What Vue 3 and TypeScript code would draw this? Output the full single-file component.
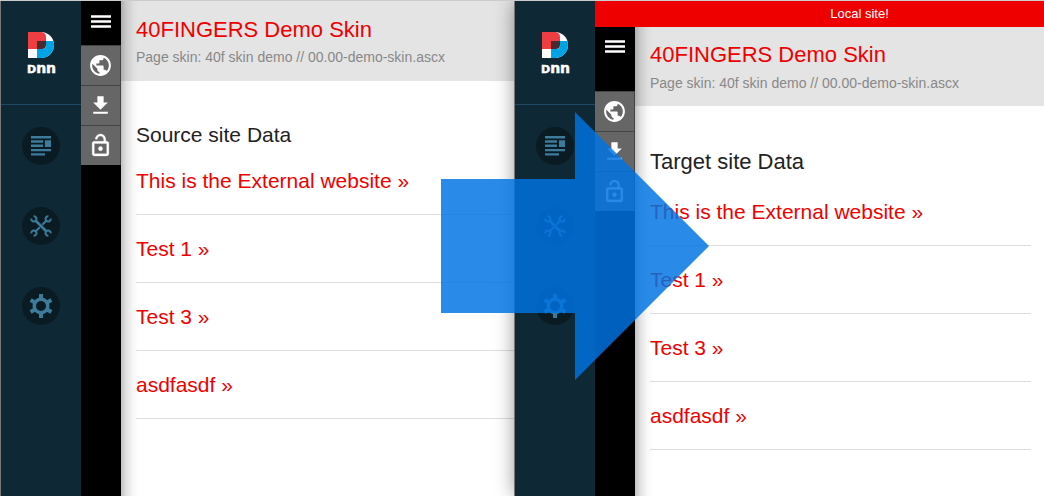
<script setup lang="ts">
interface Site {
  id: string
  notice: string
  heading: string
}

const sites: Site[] = [
  { id: 'source', notice: '', heading: 'Source site Data' },
  { id: 'target', notice: 'Local site!', heading: 'Target site Data' },
]

const links: string[] = ['This is the External website', 'Test 1', 'Test 3', 'asdfasdf']
</script>

<template>
  <main class="compare">
    <section v-for="site in sites" :key="site.id" class="site" :class="site.id">
      <nav class="persona" aria-label="Administration">
        <a class="logo" href="#" aria-label="Home">
          <svg width="30" height="42" viewBox="0 0 30 42">
            <path fill="#fff" d="M0 0h13a13 13 0 0 1 0 26H0z" />
            <path fill="#ef3e42" d="M0 0h14q4 1 4 5v4H9v8H0z" />
            <path fill="#4a2a2c" d="M9 9h9v4q0 4-4 4H9z" />
            <path fill="#00a4e4" d="M18 9h7.400q.6 2 .6 4a13 13 0 0 1-13 13H9v-9h5q4 0 4-4z" />
            <text x="-1" y="41" class="wordmark"><tspan class="cap">D</tspan><tspan>nn</tspan></text>
          </svg>
        </a>
        <button type="button" class="round" aria-label="Content">
          <svg width="20" height="20" viewBox="0 0 20 20" fill="#3d7b9b">
            <path d="M0 0h20v2.500H0zM0 4.300h12v2.500H0zM0 8.600h12v2.300H0zM14 4.300h6v6.600h-6zM0 13h20v2.300H0zM0 17.300h14v2.300H0z" />
          </svg>
        </button>
        <button type="button" class="round" aria-label="Manage">
          <svg width="22" height="22" viewBox="0 0 22 22" fill="none" stroke="#3d7b9b">
            <path stroke-width="2.600" d="M5.500 5.500l11 11" />
            <path stroke-width="2" d="M16.500 5.500l-4.300 4.300M9.800 12.200l-4.300 4.300" />
            <path stroke-width="2" d="M3.600 1.300A2.600 2.600 0 1 1 1.300 3.600M18.400 1.300A2.600 2.600 0 1 0 20.700 3.600M3.600 20.700A2.600 2.600 0 1 0 1.300 18.400M18.400 20.700A2.600 2.600 0 1 1 20.700 18.400" />
          </svg>
        </button>
        <button type="button" class="round" aria-label="Settings">
          <svg width="24" height="24" viewBox="0 0 24 24">
            <g fill="#3d7b9b">
              <circle cx="12" cy="12" r="8.500" />
              <rect x="10" y="0" width="4" height="24" />
              <rect x="10" y="0" width="4" height="24" transform="rotate(60 12 12)" />
              <rect x="10" y="0" width="4" height="24" transform="rotate(120 12 12)" />
            </g>
            <circle cx="12" cy="12" r="5" fill="#0a1b23" />
          </svg>
        </button>
      </nav>

      <div class="skin">
        <p v-if="site.notice" class="notice">{{ site.notice }}</p>
        <div class="page">
          <div class="tools">
            <button type="button" class="menu" aria-label="Menu">
              <svg width="20" height="13" viewBox="0 0 20 13" fill="#fff">
                <path d="M0 .2h20v2.600H0zM0 5.200h20v2.600H0zM0 10.200h20v2.600H0z" />
              </svg>
            </button>
            <button type="button" class="tool" aria-label="Website">
              <svg width="25" height="25" viewBox="0 0 24 24" fill="#fff">
                <path d="M12 2C6.480 2 2 6.480 2 12s4.480 10 10 10 10-4.480 10-10S17.520 2 12 2zm-1 17.930c-3.950-.49-7-3.850-7-7.930 0-.62.08-1.210.21-1.790L9 15v1c0 1.100.9 2 2 2v1.930zm6.900-2.540c-.26-.81-1-1.390-1.900-1.390h-1v-3c0-.55-.45-1-1-1H8v-2h2c.55 0 1-.45 1-1V7h2c1.100 0 2-.9 2-2v-.41c2.930 1.190 5 4.060 5 7.410 0 2.080-.8 3.970-2.100 5.390z" />
              </svg>
            </button>
            <button type="button" class="tool" aria-label="Download">
              <svg width="25" height="25" viewBox="0 0 24 24" fill="#fff">
                <path d="M19 9h-4V3H9v6H5l7 7 7-7zM5 18v2h14v-2H5z" />
              </svg>
            </button>
            <button type="button" class="tool" aria-label="Unlock">
              <svg width="25" height="25" viewBox="0 0 24 24" fill="#fff" stroke="#fff" stroke-width=".3">
                <path d="M12 17c1.100 0 2-.9 2-2s-.9-2-2-2-2 .9-2 2 .9 2 2 2zm6-9h-1V6c0-2.760-2.240-5-5-5S7 3.240 7 6h1.900c0-1.710 1.390-3.100 3.100-3.100s3.100 1.390 3.100 3.100v2H6c-1.100 0-2 .9-2 2v10c0 1.100.9 2 2 2h12c1.100 0 2-.9 2-2V10c0-1.100-.9-2-2-2zm0 12H6V10h12v10z" />
              </svg>
            </button>
          </div>
          <div class="content">
            <header class="banner">
              <h1>40FINGERS Demo Skin</h1>
              <p>Page skin: 40f skin demo // 00.00-demo-skin.ascx</p>
            </header>
            <div class="data">
              <h2>{{ site.heading }}</h2>
              <ul>
                <li v-for="link in links" :key="link"><a href="#">{{ link }} »</a></li>
              </ul>
            </div>
          </div>
        </div>
      </div>
    </section>

    <svg class="arrow" width="268" height="268" viewBox="0 0 268 268" aria-hidden="true">
      <path d="M0 67h134V0l134 134-134 134v-67H0z" />
    </svg>
  </main>
</template>

<style>
body {
  margin: 0;
  background: #fff;
}
</style>

<style scoped>
.compare {
  position: relative;
  display: grid;
  grid-template-columns: 514fr 530fr;
  min-height: 100vh;
  box-sizing: border-box;
  border-top: 1px solid #ccc;
  overflow: hidden;
  font-family: Arial, "Liberation Sans", sans-serif;
}
.site {
  display: flex;
  min-width: 0;
  border-left: 1px solid #777;
}
.target {
  box-shadow: 0 0 18px rgba(0, 0, 0, 0.4);
}
h1, h2, p, ul {
  margin: 0;
  padding: 0;
  font-weight: normal;
}
button {
  display: flex;
  align-items: center;
  justify-content: center;
  padding: 0;
  border: 0;
  cursor: pointer;
}
svg {
  display: block;
}
.persona {
  display: flex;
  flex-direction: column;
  align-items: center;
  flex: 0 0 80px;
  background: #0e2935;
}
.logo {
  display: flex;
  justify-content: center;
  box-sizing: border-box;
  width: 100%;
  height: 104px;
  padding: 31px 0 0 3px;
  border-bottom: 1px solid #1f4a66;
}
.logo svg {
  overflow: visible;
}
.wordmark {
  fill: #fff;
  stroke: #fff;
  stroke-width: 0.5px;
  font: bold 14px "DejaVu Sans", sans-serif;
}
.cap {
  font-size: 11px;
}
.round {
  width: 38px;
  height: 38px;
  margin: 22px 0 20px;
  border-radius: 50%;
  background: #0a1b23;
}
.skin {
  display: flex;
  flex: 1;
  flex-direction: column;
  min-width: 0;
}
.notice {
  background: #e00;
  color: #fff;
  font-size: 13px;
  line-height: 26px;
  text-align: center;
  padding-left: 80px;
}
.page {
  display: flex;
  flex: 1;
  min-width: 0;
}
.tools {
  flex: 0 0 40px;
  background: #000;
}
.menu {
  align-items: flex-start;
  width: 40px;
  height: 44px;
  padding-top: 14px;
  background: #000;
}
.target .menu {
  height: 64px;
  padding-top: 13px;
}
.tool {
  box-sizing: border-box;
  width: 40px;
  height: 40px;
  border-top: 1px solid #444;
  border-right: 1px solid #444;
  background: #666;
}
.content {
  --edge: linear-gradient(to right, rgba(0, 0, 0, 0.24), rgba(0, 0, 0, 0.12) 5px, rgba(0, 0, 0, 0.03) 12px, transparent 18px);
  flex: 1;
  min-width: 0;
  background: var(--edge);
}
.banner {
  box-sizing: border-box;
  height: 80px;
  padding: 15px 0 0 15px;
  background: #e4e4e4 var(--edge);
}
.target .banner {
  height: 79px;
  padding-top: 14px;
}
h1 {
  color: #e00;
  font-size: 22px;
  line-height: 28px;
}
.banner p {
  color: #888;
  font-size: 14px;
  line-height: 27px;
}
.target .banner p {
  line-height: 28px;
}
.data {
  padding: 41px 0 0 15px;
}
.target .data {
  padding: 43px 13px 0 15px;
}
h2 {
  color: #222;
  font-size: 21px;
  line-height: 25px;
}
.target h2 {
  padding-bottom: 4px;
  font-size: 22px;
}
ul {
  list-style: none;
}
li {
  border-bottom: 1px solid #ddd;
  font-size: 21px;
  line-height: 67px;
}
li a {
  color: #e00;
  text-decoration: none;
}
.arrow {
  position: absolute;
  top: 111px;
  left: 441px;
  fill: rgba(0, 115, 226, 0.835);
  pointer-events: none;
}
</style>
